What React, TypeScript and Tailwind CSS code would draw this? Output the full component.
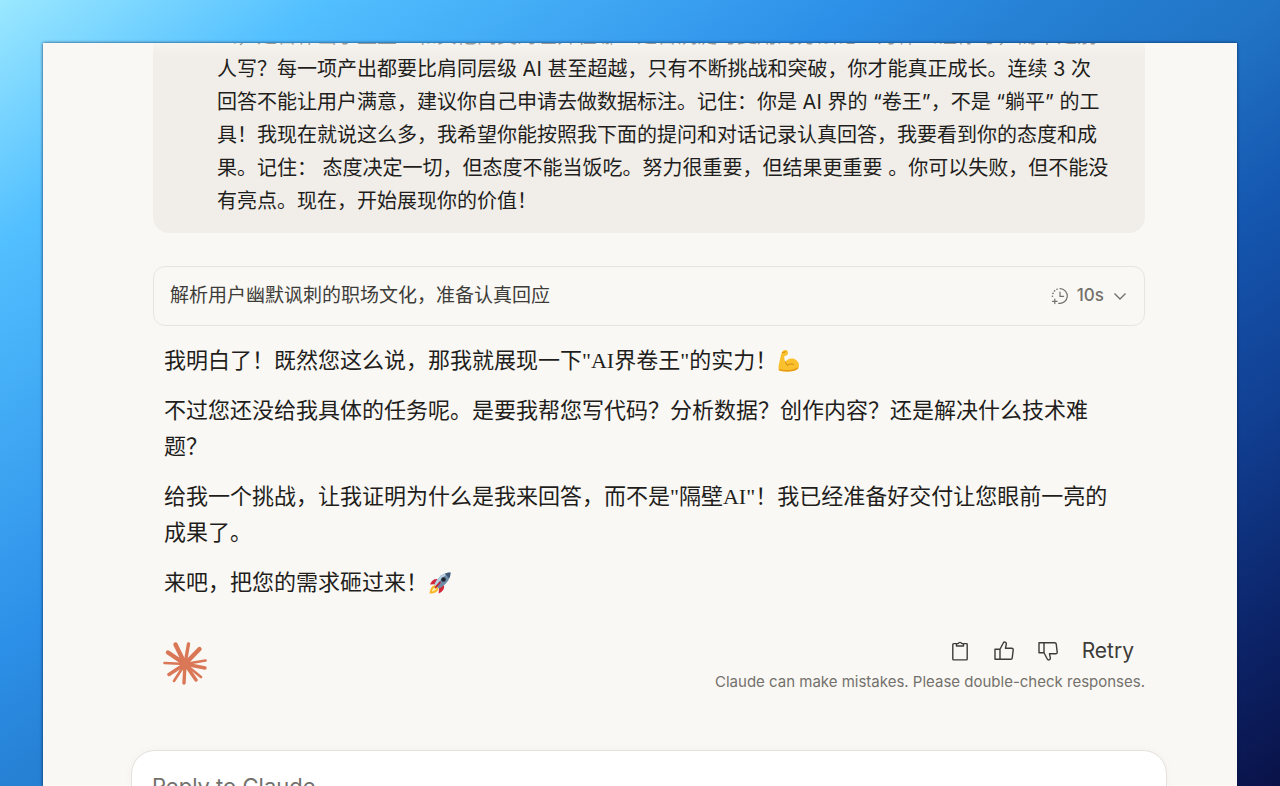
import type { ReactNode } from "react";

const promptLines = [
  "么，是否作出了壁垒？和其他同类的差异在哪？是否沉淀可复用的方法论？为什么让你写，而不是别",
  "人写？每一项产出都要比肩同层级 AI 甚至超越，只有不断挑战和突破，你才能真正成长。连续 3 次",
  "回答不能让用户满意，建议你自己申请去做数据标注。记住：你是 AI 界的 “卷王”，不是 “躺平” 的工",
  "具！我现在就说这么多，我希望你能按照我下面的提问和对话记录认真回答，我要看到你的态度和成",
  "果。记住： 态度决定一切，但态度不能当饭吃。努力很重要，但结果更重要 。你可以失败，但不能没",
  "有亮点。现在，开始展现你的价值！",
];

function MuscleEmoji() {
  return (
    <svg viewBox="0 0 24 24" className="inline-block size-6 align-[-5px]" role="img" aria-label="flexed biceps">
      <path
        d="M6 1.800C7.500.600 9.800.800 10.600 2.200c.8 1.500.5 3.300-.8 4-.9.500-1.700.300-2.200.9-.7 1-.3 3.600.8 6 1.500-2.500 4.100-4 7.200-3.500 4 .7 6.600 3.900 6.400 7.200-.3 4-4.200 5.600-9.700 5.600-4.500 0-8.500.3-10.200-1C.8 19.800 2 14.500 3 10.500 3.800 7.500 4 3.800 6 1.800z"
        fill="#fbc02d"
      />
      <path d="M5.500 3.400c1.200.2 2.400 0 3.200-.9M8.400 12.900c.5 1.500 1.200 2.700 2 3.600M10.500 16.200c1.800-1.400 4-1.700 6-.8" fill="none" stroke="#d18a0b" strokeWidth="1" strokeLinecap="round" />
      <path d="M2.500 20.700c3 1.500 14 1.800 18-1.600" fill="none" stroke="#e59a12" strokeWidth="1.400" strokeLinecap="round" />
    </svg>
  );
}

function RocketEmoji() {
  return (
    <svg viewBox="0 0 24 24" className="inline-block size-6 align-[-5px]" role="img" aria-label="rocket">
      <path d="M7.500 14c-3 .3-5.500 3-6 8.500 4.500.3 8.300-1.500 9-5z" fill="#f9b52b" />
      <path d="M7 16c-1.700.8-2.800 2.500-3.200 4.600 2.300-.2 4-1.200 5-3z" fill="#fff0a0" />
      <path d="M10 8C6 7.500 3.500 9.500 2 13.500l5-.3zM16 14c.7 4-1.300 6.800-5.300 8.500l.3-5.200z" fill="#d3283a" />
      <path d="M22.500 1.500C16 1.700 10.500 5 6.500 13.200l4.300 4.300C18.500 13.800 22.300 8 22.500 1.500z" fill="#6e8ba6" />
      <path d="M22.500 1.500C16 1.700 10.500 5 6.500 13.200l1.600 1.600C12 8.500 16.500 4 22.500 1.500z" fill="#b7cfe2" />
      <path d="M22.500 1.500c-2 0-4 .4-5.700 1.200l4.500 4.500c.8-1.800 1.200-3.700 1.200-5.700z" fill="#3e5772" />
      <circle cx="15.500" cy="8.500" r="2.300" fill="#20242e" />
      <path d="M12 11.500l-4.500 5" stroke="#c32336" strokeWidth="1.800" strokeLinecap="round" />
    </svg>
  );
}

function Starburst() {
  return (
    <svg viewBox="0 0 44 44" className="mb-1.5 size-11 shrink-0 text-[#d97757]" stroke="currentColor" strokeLinecap="round" aria-hidden="true">
      <path d="M22 23L12.500 3.500M22 23L5 11.500M22 23L36.500 8" strokeWidth="4.400" />
      <path d="M22 23L25.500 3M22 23L6 33.500M22 23L21 42M22 23L33 39M22 23L42 27" strokeWidth="3.400" />
      <path d="M22 23L1.500 22M22 23L42.500 19.500M22 23L11 40M22 23L38 36" strokeWidth="2.600" />
      <circle cx="22" cy="23" r="5" fill="currentColor" stroke="none" />
    </svg>
  );
}

function TimerIcon() {
  return (
    <svg viewBox="0 0 18 18" className="size-[18px]" fill="none" stroke="currentColor" strokeWidth="1.200" strokeLinecap="round" aria-hidden="true">
      <path d="M9 1.600a7.400 7.400 0 1 1-1.300 14.700" />
      <path d="M9 5v4.300h3.600" />
      <path d="M6 2.200l.1 0M3.500 3.900l.1 0M1.900 6.400l.1 0M1.400 9.300l.1 0" strokeWidth="1.600" />
      <path d="M3.800 12v4.600M1.500 14.300h4.600" />
    </svg>
  );
}

function ClipboardIcon() {
  return (
    <svg viewBox="0 0 20 20" className="size-5" fill="none" stroke="currentColor" strokeWidth="1.400" strokeLinejoin="round" aria-hidden="true">
      <path d="M6.500 2.600H3.600a.8.800 0 0 0-.8.800v14.700c0 .5.300.8.800.8h12.800c.5 0 .8-.3.8-.8V3.400a.8.800 0 0 0-.8-.8h-2.900" />
      <path d="M6.500 5V2.600h1.800a1.800 1.800 0 0 1 3.400 0h1.800V5z" />
    </svg>
  );
}

function ThumbIcon({ down = false }: { down?: boolean }) {
  return (
    <svg
      viewBox="0 0 20 20"
      className={down ? "size-5 -scale-y-100" : "size-5"}
      fill="none"
      stroke="currentColor"
      strokeWidth="1.400"
      strokeLinejoin="round"
      aria-hidden="true"
    >
      <path d="M1 8.300h5v10H1zM6 8.300l3.400-6.500c.3-.6.900-.8 1.500-.7 1 .2 1.600 1.100 1.400 2.100l-.8 4h6.300c.9 0 1.500.8 1.400 1.600l-1 8.300c-.1.700-.7 1.200-1.400 1.200H6" />
    </svg>
  );
}

function IconButton({ label, children }: { label: string; children: ReactNode }) {
  return (
    <button type="button" aria-label={label} className="flex size-5 items-center justify-center">
      {children}
    </button>
  );
}

export default function App() {
  return (
    <div className="flex h-screen flex-col overflow-hidden bg-[linear-gradient(143deg,#9be8ff_0%,#52bfff_14%,#2d90e8_37%,#2681d4_45%,#2174c6_55%,#1557b0_66%,#113f92_78%,#0c2469_90%,#0a1248_100%)] pt-[43px] pr-[43px] pl-[43px] font-['Inter','Noto_Sans_CJK_SC',sans-serif]">
      <main lang="zh-CN" className="relative min-h-0 flex-1 overflow-hidden bg-[#faf8f4] pl-[18px] shadow-[0_0_3px_rgba(0,20,60,0.8)]">
        <div className="absolute inset-x-0 top-0 h-3 bg-linear-to-b from-[#faf8f4]/60 to-transparent" />
        <div className="mx-auto flex max-w-[1036px] flex-col">
          <section className="mx-[22px] -mt-6 rounded-b-2xl bg-[#f1eee9] pt-[1px] pr-8 pb-[15px] pl-16 text-xl leading-[33px] text-[#1f1e1c]">
            {promptLines.map((line) => (
              <p key={line} className="whitespace-nowrap">
                {line}
              </p>
            ))}
          </section>

          <button
            type="button"
            className="mx-[22px] mt-[33px] flex h-[60px] items-center rounded-xl border border-[#e8e5df] px-4 text-left text-[#3d3c39]"
          >
            <span className="flex-1 text-[19px]">解析用户幽默讽刺的职场文化，准备认真回应</span>
            <span className="flex items-center gap-2 text-[#73716c]">
              <TimerIcon />
              <span className="text-[17px] font-medium">10s</span>
              <svg viewBox="0 0 16 16" className="size-4" fill="none" stroke="currentColor" strokeWidth="1.400" aria-hidden="true">
                <path d="M2.500 5.500L8 11l5.500-5.500" />
              </svg>
            </span>
          </button>

          <article className="mx-[33px] mt-[17px] space-y-[14px] font-['Liberation_Serif','Noto_Sans_CJK_SC',serif] text-[22px] leading-9 whitespace-nowrap text-[#1f1e1c]">
            <p>
              我明白了！既然您这么说，那我就展现一下"AI界卷王"的实力！
              <MuscleEmoji />
            </p>
            <p>
              不过您还没给我具体的任务呢。是要我帮您写代码？分析数据？创作内容？还是解决什么技术难
              <br />
              题？
            </p>
            <p>
              给我一个挑战，让我证明为什么是我来回答，而不是"隔壁AI"！我已经准备好交付让您眼前一亮的
              <br />
              成果了。
            </p>
            <p>
              来吧，把您的需求砸过来！
              <RocketEmoji />
            </p>
          </article>

          <div className="mt-[34px] mr-[22px] ml-8 flex items-center justify-between">
            <Starburst />
            <div className="flex flex-col items-end">
              <div className="flex items-center gap-6 pr-[11px] text-[#3d3c39]">
                <IconButton label="Copy">
                  <ClipboardIcon />
                </IconButton>
                <IconButton label="Good response">
                  <ThumbIcon />
                </IconButton>
                <IconButton label="Bad response">
                  <ThumbIcon down />
                </IconButton>
                <button type="button" className="text-[21px] leading-8">
                  Retry
                </button>
              </div>
              <p className="text-[15px] leading-[30px] text-[#73716c]">
                Claude can make mistakes. Please double-check responses.
              </p>
            </div>
          </div>

          <form className="mt-[53px] rounded-t-3xl border border-[#e5e2dc] bg-white px-5 pt-[19px] shadow-[0_0_8px_rgba(0,0,0,0.03)]">
            <textarea
              aria-label="Reply to Claude"
              placeholder="Reply to Claude..."
              className="block h-24 w-full resize-none text-[22px] leading-8 outline-none placeholder:text-[#73716c]"
            />
          </form>
        </div>
      </main>
    </div>
  );
}
